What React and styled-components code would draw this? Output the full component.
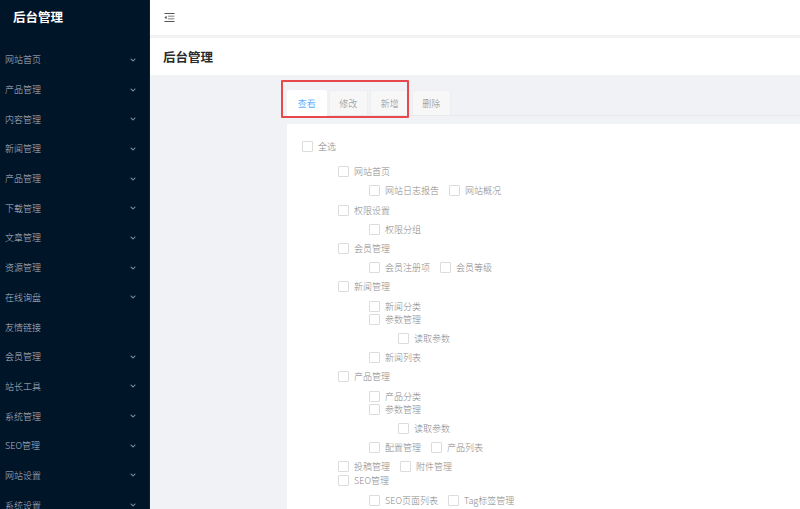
import React from "react";
import styled, { createGlobalStyle } from "styled-components";
import { AiOutlineMenuFold } from "react-icons/ai";
import { FaChevronDown } from "react-icons/fa";

const GlobalStyle = createGlobalStyle`
  html, body {
    margin: 0;
    padding: 0;
    height: 100%;
    overflow: hidden;
  }
  body {
    font-family: "Noto Sans CJK SC", "Noto Sans", "Liberation Sans", sans-serif;
  }
  #root {
    height: 100%;
  }
`;

const Layout = styled.div`
  display: flex;
  width: 800px;
  height: 509px;
  overflow: hidden;
`;

const Sidebar = styled.aside`
  width: 149px;
  flex-shrink: 0;
  background: #011529;
  border-right: 1px solid #0d2036;
  display: flex;
  flex-direction: column;
`;

const Logo = styled.div`
  height: 34px;
  line-height: 34px;
  padding-left: 13px;
  color: #fff;
  font-size: 12.5px;
  font-weight: 700;
`;

const Menu = styled.ul`
  list-style: none;
  margin: 0;
  padding: 11px 0 0;
`;

const MenuItem = styled.li`
  height: 29.7px;
  display: flex;
  align-items: center;
  justify-content: space-between;
  padding: 0 13px 0 5px;
  color: #b6bdc7;
  font-size: 9px;
  font-weight: 300;
  line-height: 1;

  svg {
    color: #7f8fa3;
    font-size: 6px;
  }
`;

const Main = styled.div`
  flex: 1;
  display: flex;
  flex-direction: column;
  background: #f0f2f5;
  min-width: 0;
`;

const TopBar = styled.div`
  height: 35px;
  background: #fff;
  border-bottom: 3px solid #f2f2f3;
  display: flex;
  align-items: center;
  padding-left: 13px;
  color: #555;
  font-size: 13px;
`;

const TitleBar = styled.div`
  height: 37px;
  background: #fff;
  display: flex;
  align-items: center;
  padding-left: 13px;
  color: #2b2b2b;
  font-size: 12.5px;
  font-weight: 700;
`;

const Content = styled.div`
  flex: 1;
  padding: 15px 0 0 137px;
  display: flex;
  flex-direction: column;
`;

const TabBar = styled.div`
  position: relative;
  display: flex;
  gap: 2px;
  border-bottom: 1px solid #e6e8eb;
`;

const Tab = styled.div`
  width: 37.5px;
  height: 24px;
  margin-bottom: -1px;
  display: flex;
  align-items: center;
  justify-content: center;
  font-size: 9px;
  font-weight: 300;
  color: ${(p) => (p.$active ? "#1890ff" : "#8c8c8c")};
  background: ${(p) => (p.$active ? "#fff" : "#f7f7f8")};
  border: 1px solid ${(p) => (p.$active ? "#fff" : "#eceef0")};
  border-bottom-color: ${(p) => (p.$active ? "#fff" : "#e6e8eb")};
  border-radius: 2px 2px 0 0;
`;

const Highlight = styled.div`
  position: absolute;
  left: -6px;
  top: -10px;
  width: 124px;
  height: 34px;
  border: 2px solid #e6484b;
  border-radius: 1px;
  pointer-events: none;
`;

const Card = styled.div`
  flex: 1;
  margin-top: 8px;
  background: #fff;
  padding: 16px 0 0 15px;
`;

const Row = styled.div`
  display: flex;
  align-items: center;
  height: 13px;
  margin-top: ${(p) => p.$mt}px;
  padding-left: ${(p) => p.$indent}px;
`;

const Check = styled.label`
  display: inline-flex;
  align-items: center;
  margin-right: 10px;
  font-size: 9px;
  font-weight: 300;
  color: #878787;
  white-space: nowrap;
`;

const Box = styled.span`
  width: 9px;
  height: 9px;
  border: 1px solid #dcdcdc;
  border-radius: 1px;
  background: #fff;
  margin-right: 5px;
`;

const menus = [
  "网站首页",
  "产品管理",
  "内容管理",
  "新闻管理",
  "产品管理",
  "下载管理",
  "文章管理",
  "资源管理",
  "在线询盘",
  "友情链接",
  "会员管理",
  "站长工具",
  "系统管理",
  "SEO管理",
  "网站设置",
  "系统设置",
];

const indents = [0, 36, 67, 96];

const rows = [
  { level: 0, mt: 0, items: ["全选"] },
  { level: 1, mt: 12.2, items: ["网站首页"] },
  { level: 2, mt: 6.2, items: ["网站日志报告", "网站概况"] },
  { level: 1, mt: 6.2, items: ["权限设置"] },
  { level: 2, mt: 6.2, items: ["权限分组"] },
  { level: 1, mt: 6.2, items: ["会员管理"] },
  { level: 2, mt: 6.2, items: ["会员注册项", "会员等级"] },
  { level: 1, mt: 6.2, items: ["新闻管理"] },
  { level: 2, mt: 6.2, items: ["新闻分类"] },
  { level: 2, mt: 0.4, items: ["参数管理"] },
  { level: 3, mt: 6.2, items: ["读取参数"] },
  { level: 2, mt: 6.2, items: ["新闻列表"] },
  { level: 1, mt: 6.2, items: ["产品管理"] },
  { level: 2, mt: 6.4, items: ["产品分类"] },
  { level: 2, mt: 0, items: ["参数管理"] },
  { level: 3, mt: 6.4, items: ["读取参数"] },
  { level: 2, mt: 6.2, items: ["配置管理", "产品列表"] },
  { level: 1, mt: 6, items: ["投稿管理", "附件管理"] },
  { level: 1, mt: 1, items: ["SEO管理"] },
  { level: 2, mt: 6.6, items: ["SEO页面列表", "Tag标签管理"] },
];

const App = () => {
  return (
    <>
      <GlobalStyle />
      <Layout>
        <Sidebar>
          <Logo>后台管理</Logo>
          <Menu>
            {menus.map((m, i) => (
              <MenuItem key={i}>
                <span>{m}</span>
                {m !== "友情链接" && <FaChevronDown />}
              </MenuItem>
            ))}
          </Menu>
        </Sidebar>
        <Main>
          <TopBar>
            <AiOutlineMenuFold />
          </TopBar>
          <TitleBar>后台管理</TitleBar>
          <Content>
            <TabBar>
              <Tab $active>查看</Tab>
              <Tab>修改</Tab>
              <Tab>新增</Tab>
              <Tab>删除</Tab>
              <Highlight />
            </TabBar>
            <Card>
              {rows.map((r, i) => (
                <Row key={i} $mt={r.mt} $indent={indents[r.level]}>
                  {r.items.map((t) => (
                    <Check key={t}>
                      <Box />
                      {t}
                    </Check>
                  ))}
                </Row>
              ))}
            </Card>
          </Content>
        </Main>
      </Layout>
    </>
  );
};

export default App;
